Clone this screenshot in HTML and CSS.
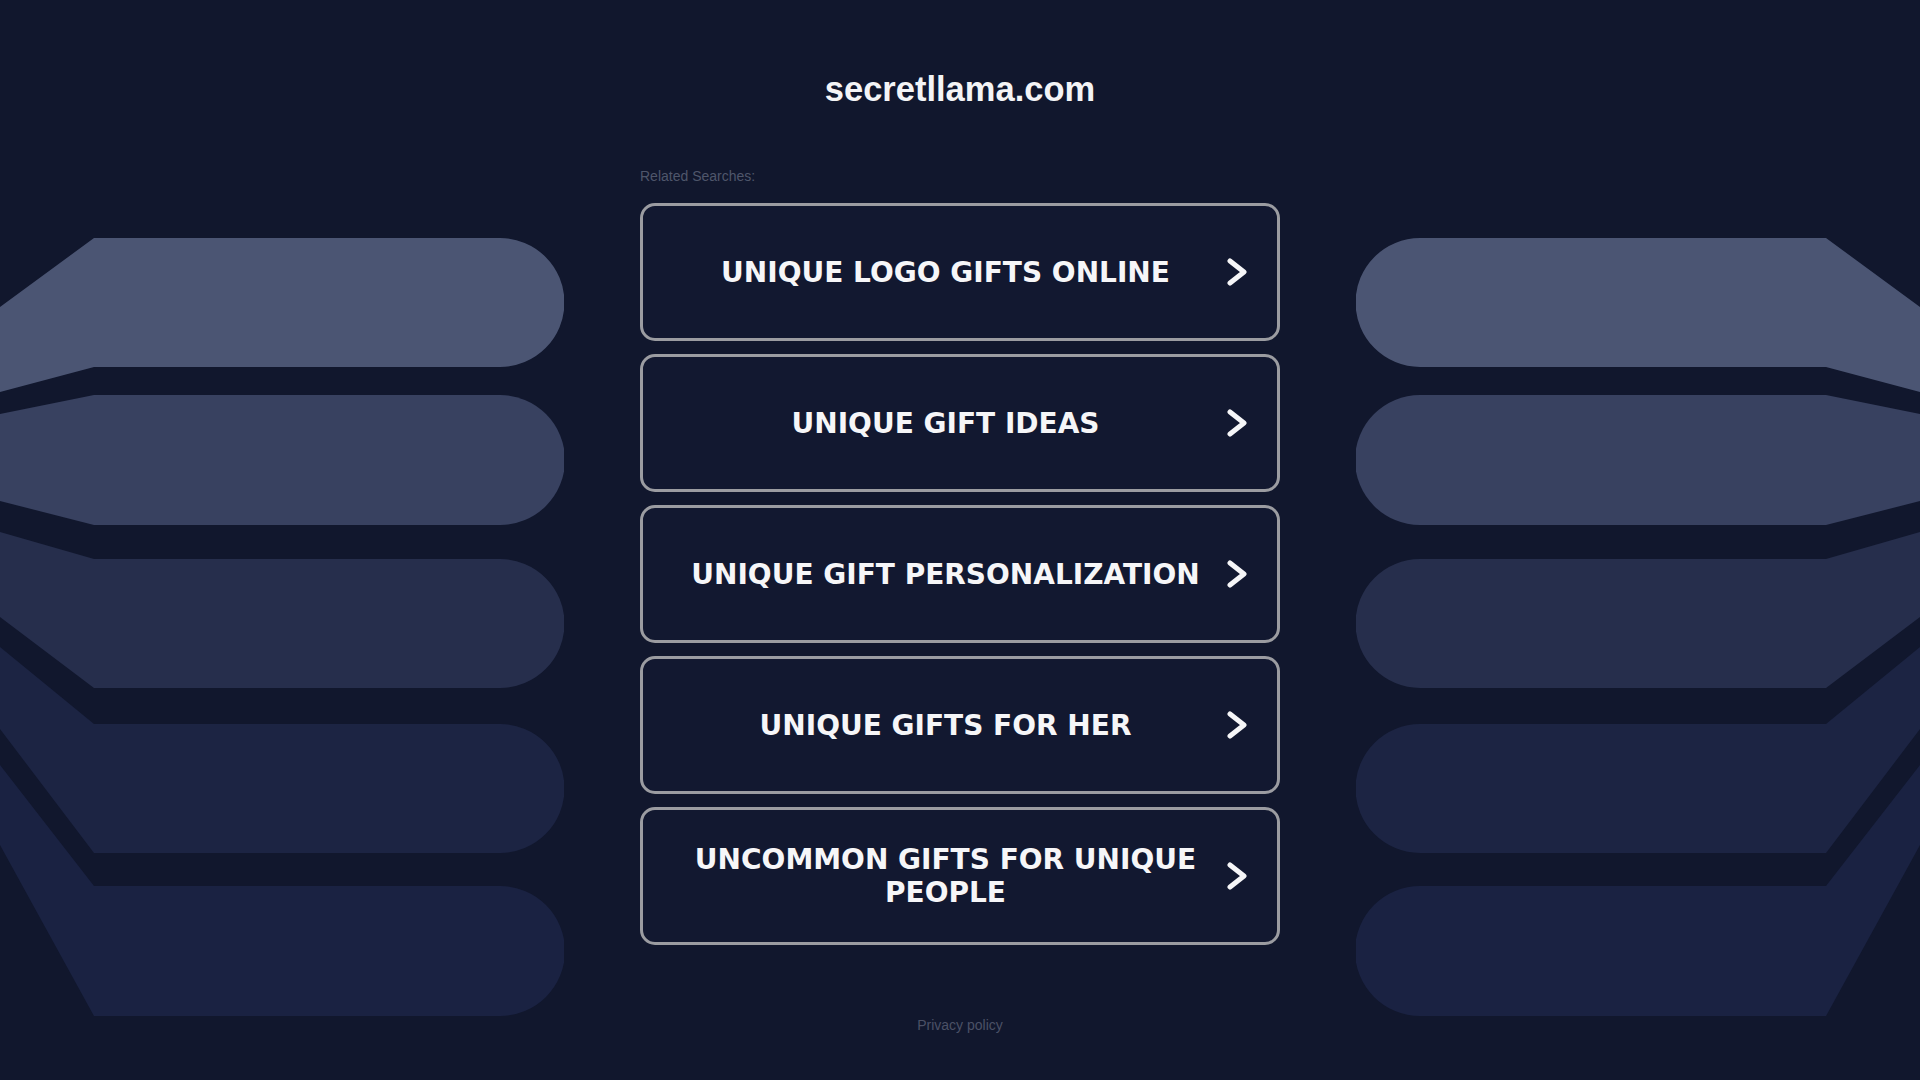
FILE: index.html
```html
<!DOCTYPE html>
<html lang="en">
<head>
  <meta charset="UTF-8">
  <title>secretllama.com</title>
  <link rel="stylesheet" href="styles.css">
</head>
<body>
  <div class="page">
    <aside class="art">
      <svg class="stack" width="564" height="1080" viewBox="0 0 564 1080">
        <path class="bar bar-1" d="M0,307 L94,238 L500,238 A64.5,64.5 0 0 1 500,367 L94,367 L0,392 Z"/>
        <path class="bar bar-2" d="M0,414 L94,395 L500,395 A65,65 0 0 1 500,525 L94,525 L0,501 Z"/>
        <path class="bar bar-3" d="M0,532 L94,559 L500,559 A64.5,64.5 0 0 1 500,688 L94,688 L0,617 Z"/>
        <path class="bar bar-4" d="M0,647 L94,724 L500,724 A64.5,64.5 0 0 1 500,853 L94,853 L0,729 Z"/>
        <path class="bar bar-5" d="M0,765 L94,886 L500,886 A65,65 0 0 1 500,1016 L94,1016 L0,845 Z"/>
      </svg>
    </aside>

    <main class="column">
      <h1 class="domain">secretllama.com</h1>
      <p class="related-title">Related Searches:</p>
      <ul class="searches">
        <li><a class="search-link" href="#"><span class="search-label">UNIQUE LOGO GIFTS ONLINE</span><svg class="chevron" width="20" height="28" viewBox="0 0 20 28"><polyline points="3,3 17,14 3,25"/></svg></a></li>
        <li><a class="search-link" href="#"><span class="search-label">UNIQUE GIFT IDEAS</span><svg class="chevron" width="20" height="28" viewBox="0 0 20 28"><polyline points="3,3 17,14 3,25"/></svg></a></li>
        <li><a class="search-link" href="#"><span class="search-label">UNIQUE GIFT PERSONALIZATION</span><svg class="chevron" width="20" height="28" viewBox="0 0 20 28"><polyline points="3,3 17,14 3,25"/></svg></a></li>
        <li><a class="search-link" href="#"><span class="search-label">UNIQUE GIFTS FOR HER</span><svg class="chevron" width="20" height="28" viewBox="0 0 20 28"><polyline points="3,3 17,14 3,25"/></svg></a></li>
        <li><a class="search-link" href="#"><span class="search-label">UNCOMMON GIFTS FOR UNIQUE PEOPLE</span><svg class="chevron" width="20" height="28" viewBox="0 0 20 28"><polyline points="3,3 17,14 3,25"/></svg></a></li>
      </ul>
      <a class="privacy" href="#">Privacy policy</a>
    </main>

    <aside class="art art-right">
      <svg class="stack" width="564" height="1080" viewBox="0 0 564 1080">
        <path class="bar bar-1" d="M0,307 L94,238 L500,238 A64.5,64.5 0 0 1 500,367 L94,367 L0,392 Z"/>
        <path class="bar bar-2" d="M0,414 L94,395 L500,395 A65,65 0 0 1 500,525 L94,525 L0,501 Z"/>
        <path class="bar bar-3" d="M0,532 L94,559 L500,559 A64.5,64.5 0 0 1 500,688 L94,688 L0,617 Z"/>
        <path class="bar bar-4" d="M0,647 L94,724 L500,724 A64.5,64.5 0 0 1 500,853 L94,853 L0,729 Z"/>
        <path class="bar bar-5" d="M0,765 L94,886 L500,886 A65,65 0 0 1 500,1016 L94,1016 L0,845 Z"/>
      </svg>
    </aside>
  </div>
</body>
</html>
```

FILE: styles.css
```css
html, body {
  margin: 0;
  padding: 0;
}
body {
  background-color: #11172d;
  font-family: "Liberation Sans", Arial, sans-serif;
  color: #fff;
  overflow: hidden;
}
.page {
  display: flex;
  justify-content: center;
  gap: 76px;
  height: 1080px;
}
.art {
  width: 564px;
  flex: none;
}
.stack {
  display: block;
}
.art-right .stack {
  transform: scaleX(-1);
}
.bar-1 { fill: #4b5573; }
.bar-2 { fill: #384160; }
.bar-3 { fill: #262e4c; }
.bar-4 { fill: #1c2443; }
.bar-5 { fill: #1a2242; }

.column {
  width: 640px;
  flex: none;
  display: flex;
  flex-direction: column;
  padding-top: 69px;
}
.domain {
  margin: 0;
  font-size: 34.5px;
  line-height: 40px;
  font-weight: bold;
  text-align: center;
  color: #f4f4f6;
}
.related-title {
  margin: 59px 0 0;
  font-size: 14px;
  line-height: 16px;
  color: #4f566b;
}
.searches {
  list-style: none;
  margin: 19px 0 0;
  padding: 0;
}
.searches li {
  margin-bottom: 13px;
}
.search-link {
  display: flex;
  align-items: center;
  box-sizing: border-box;
  height: 138px;
  padding: 0 30px 0 21px;
  border: 3px solid #9b9ca1;
  border-radius: 15px;
  background-color: #121830;
  color: #f6f6f8;
  text-decoration: none;
}
.search-label {
  flex: 1;
  text-align: center;
  font-family: "DejaVu Sans", Verdana, sans-serif;
  font-weight: bold;
  font-size: 28px;
  line-height: 33px;
}
.chevron {
  flex: none;
  fill: none;
  stroke: #f6f6f8;
  stroke-width: 5;
  stroke-linecap: round;
  stroke-linejoin: round;
}
.privacy {
  margin-top: 59px;
  align-self: center;
  font-size: 14px;
  line-height: 16px;
  color: #4b5166;
  text-decoration: none;
}
```
